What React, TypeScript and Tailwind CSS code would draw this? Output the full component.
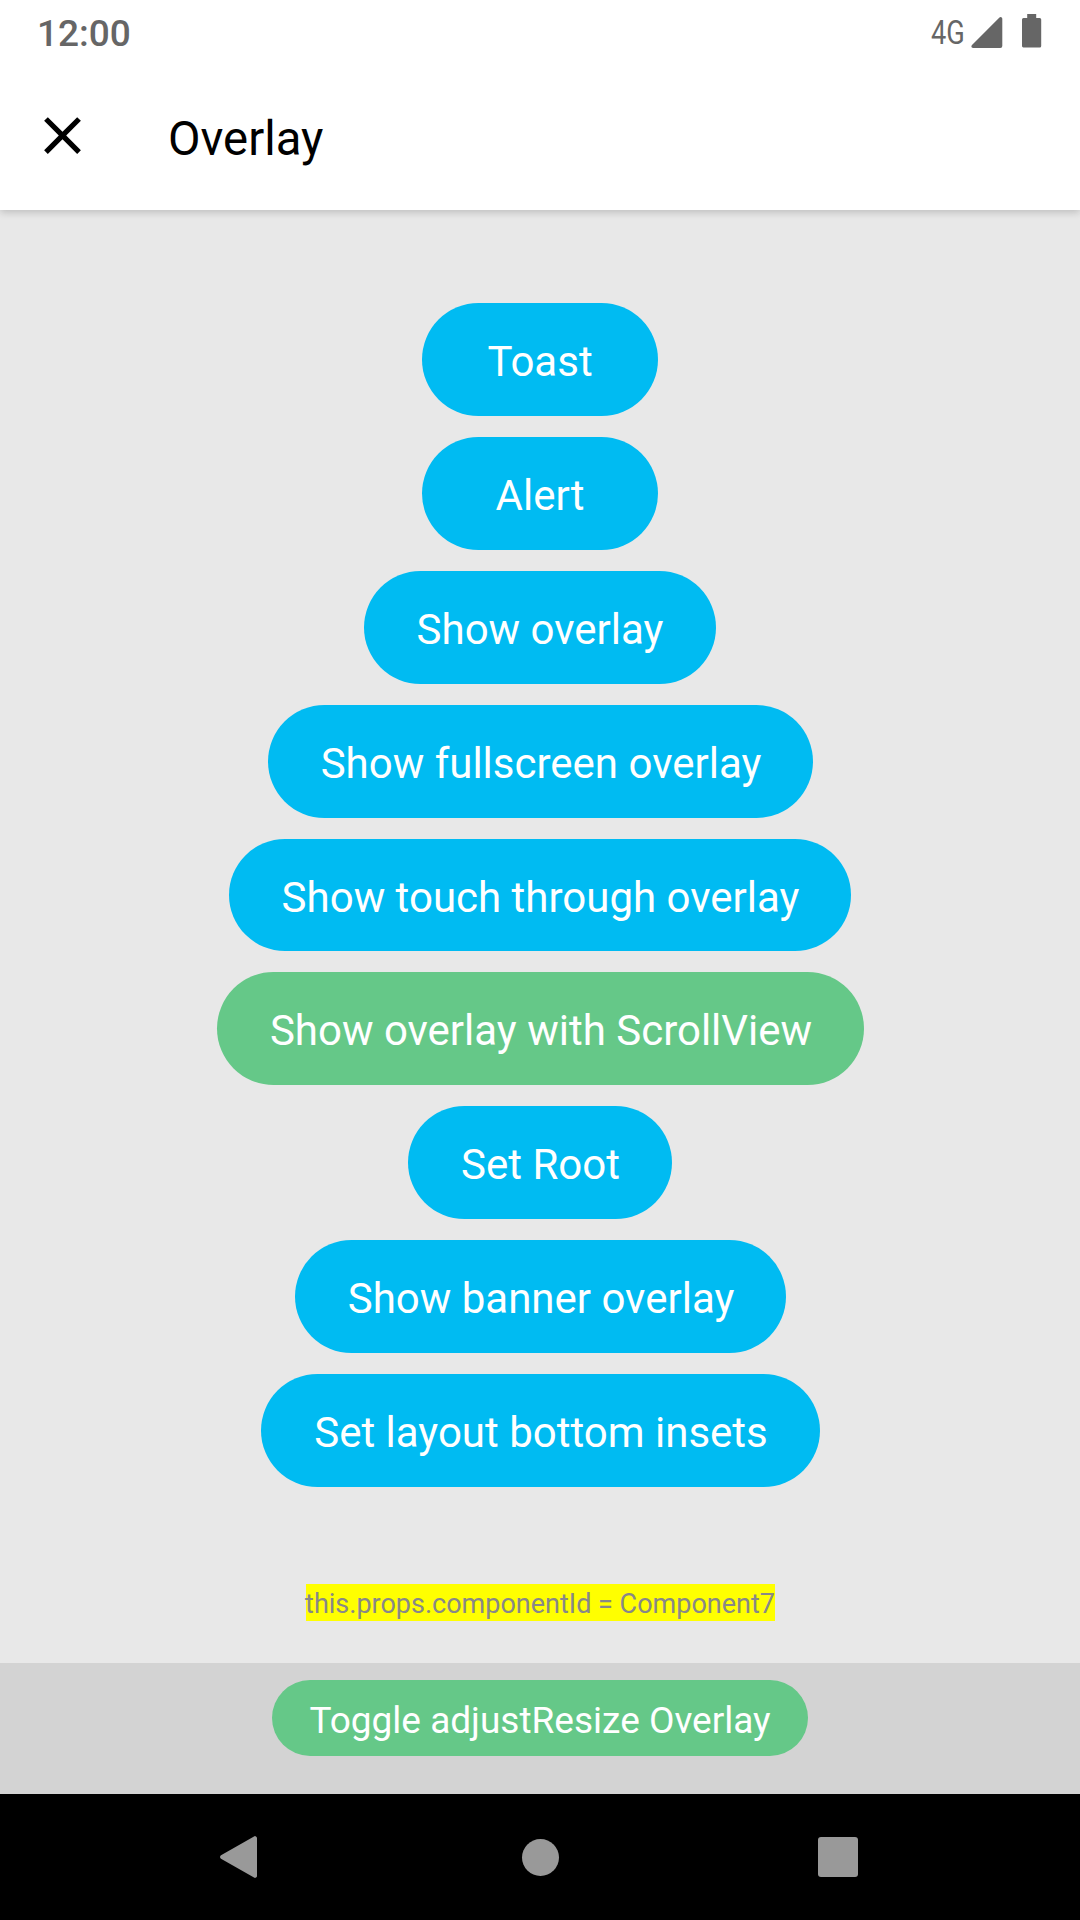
type ActionButton = { label: string; className: string };

const actions: ActionButton[] = [
  { label: "Toast", className: "h-[113px] w-[236px] bg-[#00bbf2]" },
  { label: "Alert", className: "h-[113px] w-[236px] bg-[#00bbf2]" },
  { label: "Show overlay", className: "h-[113px] w-[352px] bg-[#00bbf2]" },
  { label: "Show fullscreen overlay", className: "h-[113px] w-[545px] pl-[2px] bg-[#00bbf2]" },
  { label: "Show touch through overlay", className: "h-[112px] w-[622px] pl-[1px] bg-[#00bbf2]" },
  { label: "Show overlay with ScrollView", className: "h-[113px] w-[647px] pl-[2px] bg-[#65c888]" },
  { label: "Set Root", className: "h-[113px] w-[264px] pl-[1px] bg-[#00bbf2]" },
  { label: "Show banner overlay", className: "h-[113px] w-[491px] pl-[2px] bg-[#00bbf2]" },
  { label: "Set layout bottom insets", className: "h-[113px] w-[559px] pl-[2px] bg-[#00bbf2]" },
];

function StatusBar() {
  return (
    <div className="flex h-[63px] shrink-0 items-start justify-between pr-[38px] pl-[37px] text-[#666]">
      <span className="mt-[12px] text-[37px] leading-[43px] font-medium">12:00</span>
      <div className="flex items-start">
        <span className="mt-[13px] w-[34px] origin-left scale-x-[0.8] text-[34px] leading-[38px]">4G</span>
        <svg className="mt-[16px] ml-[6px] h-[32px] w-[32px]" viewBox="0 0 32 32" fill="currentColor">
          <path d="M31.3 3v27a2 2 0 0 1-2 2H2.200c-1.800 0-2.400-1.900-1.200-3.100L28.200 1.700c1.200-1.200 3.100-.5 3.100 1.300Z" />
        </svg>
        <svg className="mt-[14px] ml-[19px] h-[34px] w-[20px]" viewBox="0 0 20 34" fill="currentColor">
          <path d="M5.200 0h9v4h3.500a1.500 1.500 0 0 1 1.500 1.500v26.500a1.500 1.500 0 0 1-1.500 1.500h-16A1.500 1.500 0 0 1 0 32V5.500A1.500 1.500 0 0 1 1.500 4h3.700Z" />
        </svg>
      </div>
    </div>
  );
}

function Header() {
  return (
    <header className="z-10 h-[210px] shrink-0 bg-white shadow-[0_2px_8px_rgba(0,0,0,0.2)]">
      <StatusBar />
      <div className="flex h-[147px] items-center pl-[31px]">
        <svg className="-mt-[2px] h-[63px] w-[63px]" viewBox="0 0 24 24" fill="#000">
          <path d="M19 6.410L17.590 5 12 10.590 6.410 5 5 6.410 10.590 12 5 17.590 6.410 19 12 13.410 17.590 19 19 17.590 13.410 12z" />
        </svg>
        <h1 className="mt-[5px] ml-[74px] text-[47.25px] leading-[56px] text-black">Overlay</h1>
      </div>
    </header>
  );
}

function NavigationBar() {
  return (
    <nav className="flex h-[126px] shrink-0 items-center bg-black pl-[219px] text-[#999]">
      <svg className="h-[44px] w-[38px]" viewBox="0 0 38 44" fill="currentColor">
        <path d="M2 20.300 35 1.400a2 2 0 0 1 3 1.700v37.800a2 2 0 0 1-3 1.700L2 23.700a2 2 0 0 1 0-3.400Z" />
      </svg>
      <div className="mt-[1px] ml-[265px] h-[37px] w-[37px] rounded-full bg-[#999]" />
      <div className="ml-[259px] h-[40px] w-[40px] rounded-[3px] bg-[#999]" />
    </nav>
  );
}

export default function App() {
  return (
    <div className="flex h-[1920px] w-[1080px] flex-col overflow-hidden bg-[#e8e8e8] font-[Roboto,sans-serif]">
      <Header />
      <main className="flex grow flex-col items-center pt-[93px]">
        <div className="flex flex-col items-center gap-[21px]">
          {actions.map(({ label, className }) => (
            <button
              key={label}
              className={`flex items-center justify-center rounded-full pt-[4px] text-[42px] leading-[49px] whitespace-nowrap text-white ${className}`}
            >
              {label}
            </button>
          ))}
        </div>
        <p className="mt-[97px] flex h-[37px] w-[469px] items-center justify-center bg-[#ff0] pt-[3px] text-[27px] leading-[32px] whitespace-nowrap text-[#888]">
          this.props.componentId = Component7
        </p>
      </main>
      <div className="flex h-[131px] shrink-0 justify-center bg-[#d3d3d3] pt-[17px]">
        <button className="flex h-[76px] w-[536px] items-center justify-center rounded-full pt-[4px] text-[37px] leading-[43px] whitespace-nowrap text-white bg-[#65c888]">
          Toggle adjustResize Overlay
        </button>
      </div>
      <NavigationBar />
    </div>
  );
}
